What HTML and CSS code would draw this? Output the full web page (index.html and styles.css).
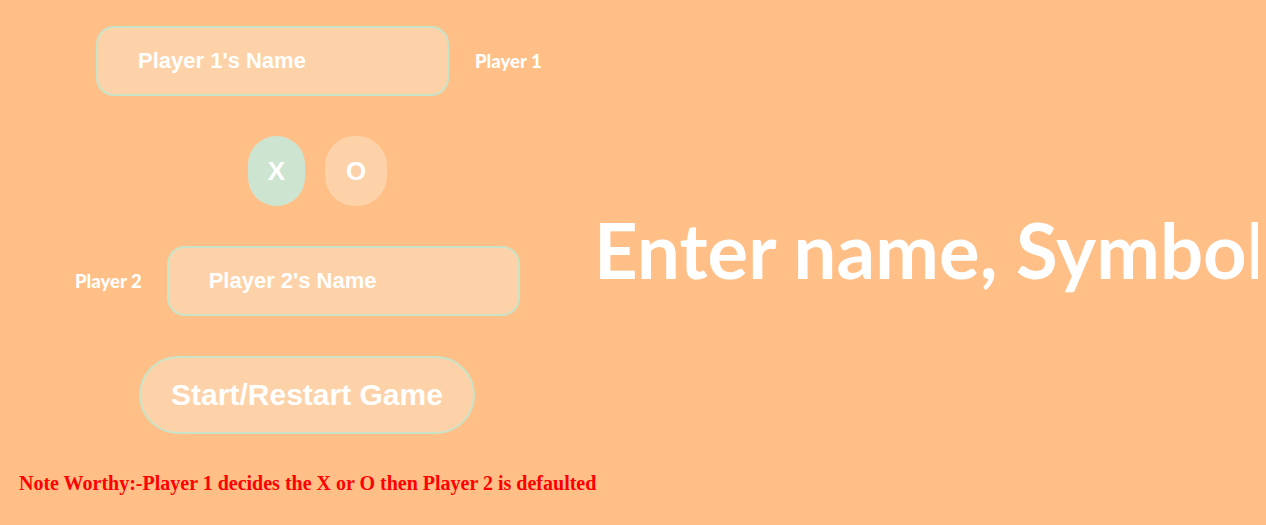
FILE: index.html
```html
<!DOCTYPE html>
<html lang="en">
<head>
<meta charset="utf-8">
<title>Tic Tac Toe</title>
<link rel="stylesheet" href="styles.css">
</head>
<body>
<div class="page">
  <div class="controls">
    <div class="row row-p1">
      <div class="name-input">Player 1's Name</div>
      <span class="player-label">Player 1</span>
    </div>
    <div class="row row-sym">
      <button class="sym sym-x">X</button>
      <button class="sym sym-o">O</button>
    </div>
    <div class="row row-p2">
      <span class="player-label">Player 2</span>
      <div class="name-input">Player 2's Name</div>
    </div>
    <div class="row row-start">
      <button class="start">Start/Restart Game</button>
    </div>
    <p class="note">Note Worthy:-Player 1 decides the X or O then Player 2 is defaulted</p>
  </div>
  <h1 class="status">Enter name, Symbol</h1>
</div>
</body>
</html>
```

FILE: styles.css
```css
html {
  margin: 0;
  padding: 0;
  background: #ffbf86;
  overflow: hidden;
}
body {
  margin: 8px;
  padding: 0;
}
.page {
  display: flex;
  align-items: flex-start;
}
.controls {
  width: 588px;
  flex: none;
  display: flex;
  flex-direction: column;
  padding-top: 18px;
}
.row {
  display: flex;
  align-items: center;
}
.name-input {
  box-sizing: border-box;
  width: 353px;
  height: 70px;
  border: 2px solid #c9e3c8;
  border-radius: 18px;
  background: #fdd2a8;
  color: #fff;
  font-family: "Liberation Sans", Arial, sans-serif;
  font-weight: bold;
  font-size: 22px;
  display: flex;
  align-items: center;
  padding-left: 40px;
}
.player-label {
  font-family: Lato, sans-serif;
  font-weight: 900;
  font-size: 18.5px;
  color: #fff;
}
.row-p1 {
  padding-left: 88px;
  gap: 26px;
}
.row-sym {
  margin-top: 40px;
  padding-left: 240px;
  gap: 20px;
}
.sym {
  box-sizing: border-box;
  height: 70px;
  border: none;
  border-radius: 30px;
  color: #fff;
  font-family: "Liberation Sans", Arial, sans-serif;
  font-weight: bold;
  font-size: 26px;
  padding: 0;
}
.sym-x {
  width: 57px;
  background: #cde5d0;
}
.sym-o {
  width: 62px;
  background: #fdd2a8;
}
.row-p2 {
  margin-top: 40px;
  padding-left: 67px;
  gap: 25px;
}
.row-start {
  margin-top: 40px;
  padding-left: 131px;
}
.start {
  box-sizing: border-box;
  width: 336px;
  height: 78px;
  border: 2px solid #c9e3c8;
  border-radius: 39px;
  background: #fdd2a8;
  color: #fff;
  font-family: "Liberation Sans", Arial, sans-serif;
  font-weight: bold;
  font-size: 30px;
  padding: 0;
}
.note {
  margin: 38px 0 0 11px;
  font-family: "Liberation Serif", "Times New Roman", serif;
  font-weight: bold;
  font-size: 20px;
  color: #ff0000;
  white-space: nowrap;
}
.status {
  flex: none;
  margin: 196px 0 0 -2px;
  font-family: Lato, sans-serif;
  font-weight: bold;
  font-size: 76px;
  letter-spacing: 0.1px;
  line-height: 1.2;
  color: #fff;
  white-space: nowrap;
}
```
